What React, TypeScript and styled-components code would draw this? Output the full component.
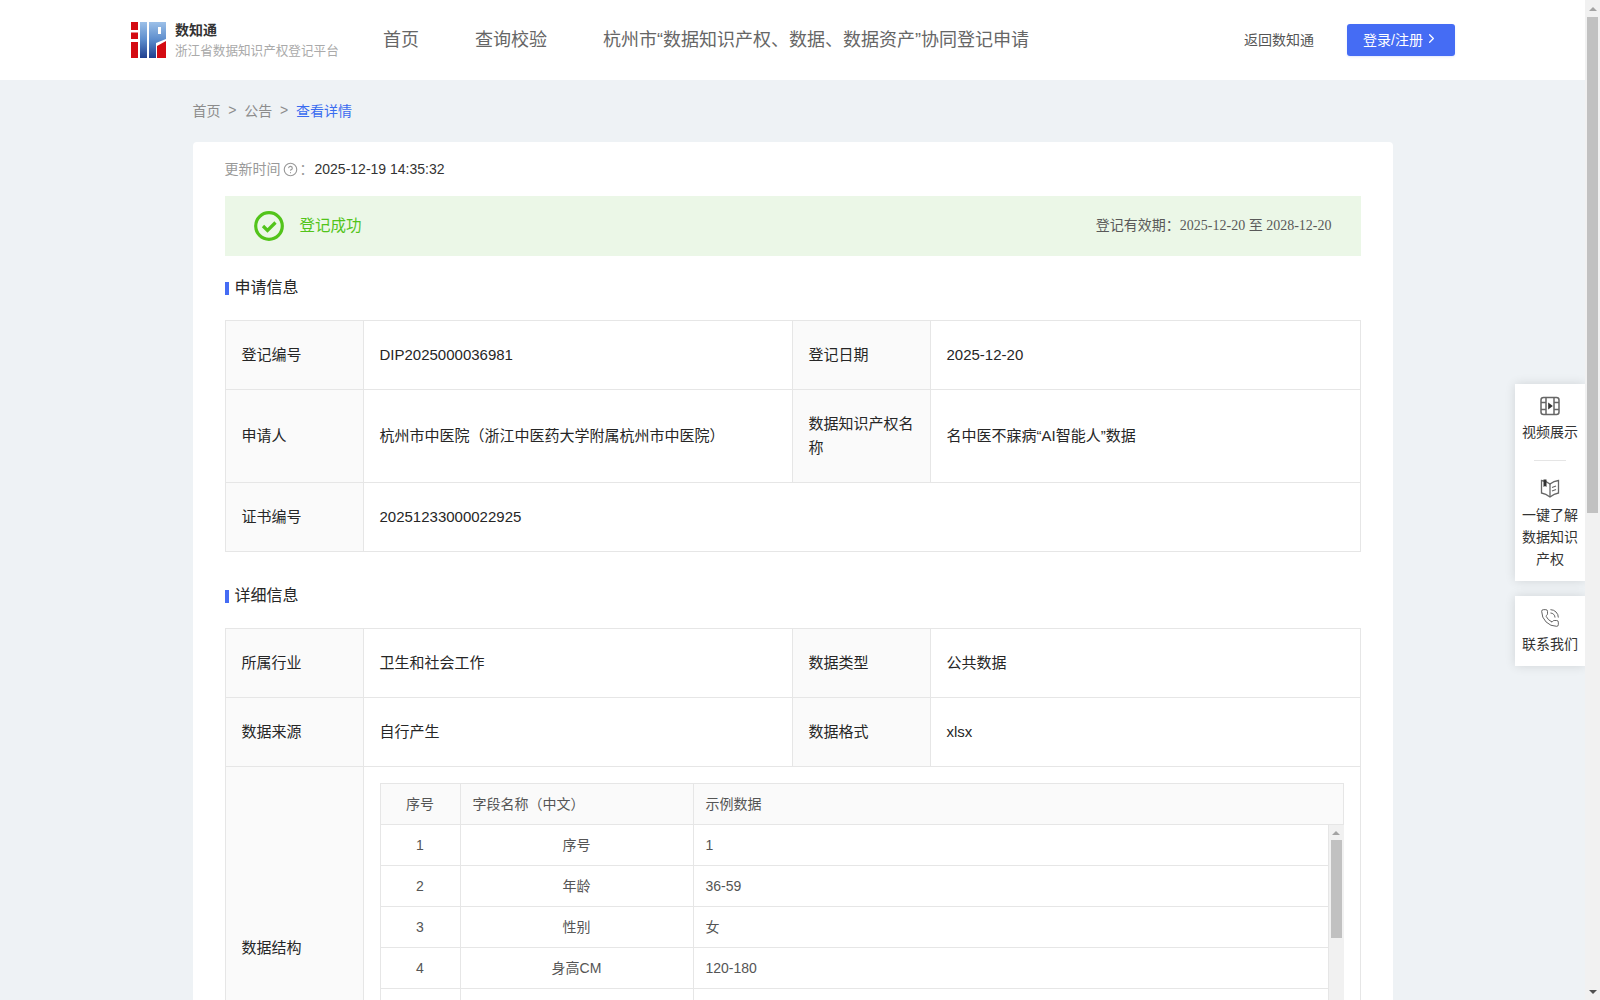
import styled, { createGlobalStyle } from 'styled-components'
import { ChevronRight, CircleHelp, PhoneCall } from 'lucide-react'

const GlobalStyle = createGlobalStyle`
  html, body {
    margin: 0;
    padding: 0;
    height: 100%;
    overflow: hidden;
    background: #eef2f5;
    font-family: "Liberation Sans", "Noto Sans CJK SC", sans-serif;
    color: #262626;
  }
`

const fields = [
  ['1', '序号', '1'],
  ['2', '年龄', '36-59'],
  ['3', '性别', '女'],
  ['4', '身高CM', '120-180'],
  ['', '', ''],
  ['', '', ''],
  ['', '', ''],
]

const Logo = () => (
  <svg width="35" height="36" viewBox="0 0 35 36">
    <defs>
      <linearGradient id="logoBlue" x1="0" y1="0" x2="0" y2="1">
        <stop offset="0" stopColor="#9cc0e8" />
        <stop offset="0.5" stopColor="#5c8ccc" />
        <stop offset="1" stopColor="#1f3f8f" />
      </linearGradient>
    </defs>
    <path fill="#d40b12" d="M0 0h7v8H0zM0 10.500h7v6.500H0zM0 20h7v16H0z" />
    <path fill="url(#logoBlue)" d="M9 0h7v36H9z" />
    <path fill="url(#logoBlue)" fillRule="evenodd" d="M18 0h17v17l-10 4v15h-7zM27 5v7h3V5z" />
    <path fill="#d40b12" d="M26 24l9-5v17h-9z" />
  </svg>
)

const FilmIcon = () => (
  <svg width="20" height="20" viewBox="0 0 20 20" fill="none" stroke="#666" strokeWidth="1.5">
    <rect x="1" y="1.500" width="18" height="17" rx="2.500" />
    <path d="M6 1.500v17M14 1.500v17M1 6.500h5M1 13.500h5M14 6.500h5M14 13.500h5" />
    <path d="M8.200 6.500l4.600 3.500-4.600 3.500z" fill="#333" stroke="none" />
  </svg>
)

const BookIcon = () => (
  <svg width="20" height="20" viewBox="0 0 20 20" fill="none" stroke="#666" strokeWidth="1.300">
    <path d="M1.500 2.500c3 .3 6 1.500 8.500 3.500 2.500-2 5.500-3.200 8.500-3.500v12.500c-3 .5-6 2-8.500 4-2.500-2-5.500-3.500-8.500-4z" />
    <path d="M10 6v13M12 9.500l4-1.500M12 13l4-1.500" />
    <path d="M3.500 1.500h3v7.500l-1.500-1-1.500 1z" fill="#333" stroke="none" />
  </svg>
)

const SuccessIcon = () => (
  <svg width="30" height="30" viewBox="0 0 30 30" fill="none" stroke="#52c41a">
    <circle cx="15" cy="15" r="13.300" strokeWidth="3.200" />
    <path d="M9 15l4.500 4.500L21.500 11.500" strokeWidth="3.200" />
  </svg>
)

const ScrollRail = ({
  button,
  thumbHeight,
  downColor,
}: {
  button: number
  thumbHeight: number
  downColor?: string
}) => (
  <Rail>
    <RailButton $size={button}>
      <ArrowUp />
    </RailButton>
    <Thumb $height={thumbHeight} />
    <RailFill />
    {downColor && (
      <RailButton $size={button}>
        <ArrowDown $color={downColor} />
      </RailButton>
    )}
  </Rail>
)

export default function App() {
  return (
    <>
      <GlobalStyle />
      <Shell>
        <Page>
          <Header>
            <Brand>
              <Logo />
              <BrandText>
                <BrandName>数知通</BrandName>
                <BrandSub>浙江省数据知识产权登记平台</BrandSub>
              </BrandText>
            </Brand>
            <Nav>
              <NavItem>首页</NavItem>
              <NavItem>查询校验</NavItem>
              <NavItem>杭州市“数据知识产权、数据、数据资产”协同登记申请</NavItem>
            </Nav>
            <HeaderRight>
              <BackLink>返回数知通</BackLink>
              <LoginButton>
                登录/注册
                <ChevronRight size={15} strokeWidth={2} />
              </LoginButton>
            </HeaderRight>
          </Header>

          <Content>
            <Breadcrumb>
              <span>首页</span>
              <Sep>&gt;</Sep>
              <span>公告</span>
              <Sep>&gt;</Sep>
              <Current>查看详情</Current>
            </Breadcrumb>

            <Card>
              <UpdateRow>
                <UpdateLabel>
                  更新时间
                  <CircleHelp size={15} strokeWidth={1.8} />：
                </UpdateLabel>
                <span>2025-12-19 14:35:32</span>
              </UpdateRow>

              <StatusBar>
                <StatusLeft>
                  <SuccessIcon />
                  <StatusText>登记成功</StatusText>
                </StatusLeft>
                <Validity>
                  <span>登记有效期：</span>
                  <ValidityDates>2025-12-20 至 2028-12-20</ValidityDates>
                </Validity>
              </StatusBar>

              <SectionTitle>申请信息</SectionTitle>
              <InfoTable>
                <InfoCols />
                <tbody>
                  <InfoRow $height={69}>
                    <LabelCell>登记编号</LabelCell>
                    <ValueCell>DIP2025000036981</ValueCell>
                    <LabelCell>登记日期</LabelCell>
                    <ValueCell>2025-12-20</ValueCell>
                  </InfoRow>
                  <InfoRow $height={93}>
                    <LabelCell>申请人</LabelCell>
                    <ValueCell>杭州市中医院（浙江中医药大学附属杭州市中医院）</ValueCell>
                    <LabelCell>数据知识产权名称</LabelCell>
                    <ValueCell>名中医不寐病“AI智能人”数据</ValueCell>
                  </InfoRow>
                  <InfoRow $height={69}>
                    <LabelCell>证书编号</LabelCell>
                    <ValueCell colSpan={3}>20251233000022925</ValueCell>
                  </InfoRow>
                </tbody>
              </InfoTable>

              <SecondTitle>详细信息</SecondTitle>
              <InfoTable>
                <InfoCols />
                <tbody>
                  <InfoRow $height={69}>
                    <LabelCell>所属行业</LabelCell>
                    <ValueCell>卫生和社会工作</ValueCell>
                    <LabelCell>数据类型</LabelCell>
                    <ValueCell>公共数据</ValueCell>
                  </InfoRow>
                  <InfoRow $height={69}>
                    <LabelCell>数据来源</LabelCell>
                    <ValueCell>自行产生</ValueCell>
                    <LabelCell>数据格式</LabelCell>
                    <ValueCell>xlsx</ValueCell>
                  </InfoRow>
                  <InfoRow>
                    <LabelCell>数据结构</LabelCell>
                    <StructureCell colSpan={3}>
                      <FieldHead>
                        <FieldCols />
                        <thead>
                          <tr>
                            <HeadCell $center>序号</HeadCell>
                            <HeadCell>字段名称（中文）</HeadCell>
                            <HeadCell>示例数据</HeadCell>
                          </tr>
                        </thead>
                      </FieldHead>
                      <FieldBody>
                        <FieldTable>
                          <FieldCols />
                          <tbody>
                            {fields.map((row, i) => (
                              <tr key={i}>
                                <BodyCell $center>{row[0]}</BodyCell>
                                <BodyCell $center>{row[1]}</BodyCell>
                                <BodyCell>{row[2]}</BodyCell>
                              </tr>
                            ))}
                          </tbody>
                        </FieldTable>
                        <ScrollRail button={15} thumbHeight={98} />
                      </FieldBody>
                    </StructureCell>
                  </InfoRow>
                </tbody>
              </InfoTable>
            </Card>
          </Content>

          <SideDock>
            <SidePanel>
              <SideItem>
                <FilmIcon />
                <SideText>视频展示</SideText>
              </SideItem>
              <SideDivider />
              <SideItem $gap={6}>
                <BookIcon />
                <SideText>一键了解数据知识产权</SideText>
              </SideItem>
            </SidePanel>
            <SidePanel>
              <SideItem>
                <PhoneCall size={20} strokeWidth={1.1} color="#555" />
                <SideText>联系我们</SideText>
              </SideItem>
            </SidePanel>
          </SideDock>
        </Page>
        <ScrollRail button={17} thumbHeight={496} downColor="#505050" />
      </Shell>
    </>
  )
}

const InfoCols = () => (
  <colgroup>
    <col width={138} />
    <col width={429} />
    <col width={138} />
    <col />
  </colgroup>
)

const FieldCols = () => (
  <colgroup>
    <col width={80} />
    <col width={233} />
    <col />
  </colgroup>
)

const Shell = styled.div`
  display: flex;
  height: 100vh;
  overflow: hidden;
`

const Page = styled.div`
  position: relative;
  flex: 1;
  min-width: 0;
  overflow: hidden;
`

const Rail = styled.div`
  width: 15px;
  flex-shrink: 0;
  display: flex;
  flex-direction: column;
  align-items: center;
  background: #f1f1f1;
`

const RailButton = styled.div<{ $size: number }>`
  height: ${(p) => p.$size}px;
  flex-shrink: 0;
  display: flex;
  align-items: center;
  justify-content: center;
`

const ArrowUp = styled.div`
  width: 0;
  height: 0;
  border-left: 4px solid transparent;
  border-right: 4px solid transparent;
  border-bottom: 4px solid #a3a3a3;
`

const ArrowDown = styled.div<{ $color: string }>`
  width: 0;
  height: 0;
  border-left: 4px solid transparent;
  border-right: 4px solid transparent;
  border-top: 4px solid ${(p) => p.$color};
`

const Thumb = styled.div<{ $height: number }>`
  width: 11px;
  flex-shrink: 0;
  height: ${(p) => p.$height}px;
  background: #c1c1c1;
`

const RailFill = styled.div`
  flex: 1;
`

const Header = styled.header`
  height: 80px;
  background: #fff;
  display: flex;
  align-items: center;
  padding: 0 130px 0 131px;
`

const Brand = styled.div`
  display: flex;
  align-items: center;
  gap: 9px;
  width: 224px;
`

const BrandText = styled.div`
  display: flex;
  flex-direction: column;
  gap: 3px;
  padding-top: 1px;
`

const BrandName = styled.div`
  font-size: 14px;
  font-weight: 700;
  line-height: 18px;
  color: #333;
`

const BrandSub = styled.div`
  font-size: 12.6px;
  line-height: 18px;
  color: #aaa;
  white-space: nowrap;
`

const Nav = styled.nav`
  display: flex;
  gap: 56px;
  margin: 0 0 4px 28px;
`

const NavItem = styled.a`
  font-size: 18px;
  color: #666;
  white-space: nowrap;
`

const HeaderRight = styled.div`
  margin-left: auto;
  display: flex;
  align-items: center;
  gap: 33px;
`

const BackLink = styled.a`
  font-size: 14px;
  color: #555;
  padding-bottom: 3px;
`

const LoginButton = styled.button`
  width: 108px;
  height: 32px;
  border: none;
  border-radius: 3px;
  padding: 0 0 3px;
  background: #456cf4;
  color: #fff;
  font: inherit;
  font-size: 14px;
  display: flex;
  align-items: center;
  justify-content: center;
  gap: 1px;
  box-shadow: 0 1px 2px rgba(69, 108, 244, 0.15);
`

const Content = styled.main`
  width: 1200px;
  margin: 0 auto;
`

const Breadcrumb = styled.div`
  box-sizing: border-box;
  height: 62px;
  padding-bottom: 3px;
  display: flex;
  align-items: center;
  font-size: 14px;
  color: #8c8c8c;
`

const Sep = styled.span`
  margin: 0 7.8px;
`

const Current = styled.span`
  color: #3a6cf0;
`

const Card = styled.section`
  background: #fff;
  border-radius: 4px;
  padding: 0 32px 32px;
`

const UpdateRow = styled.div`
  height: 54px;
  display: flex;
  align-items: center;
  font-size: 14px;
  color: #333;
`

const UpdateLabel = styled.span`
  display: inline-flex;
  align-items: center;
  gap: 2px;
  margin-bottom: 2px;
  color: #999;
  width: 90px;
  white-space: nowrap;

  svg {
    margin-top: 2px;
  }
`

const StatusBar = styled.div`
  height: 60px;
  background: #ebf7e7;
  display: flex;
  align-items: center;
  justify-content: space-between;
  padding: 0 29px;
`

const StatusLeft = styled.div`
  display: flex;
  align-items: center;
  gap: 16px;
`

const StatusText = styled.span`
  font-size: 15.5px;
  color: #52c41a;
  margin-bottom: 5px;
`

const Validity = styled.div`
  font-size: 14px;
  color: #595959;
  margin-bottom: 5px;
`

const ValidityDates = styled.span`
  font-family: "Liberation Serif", "Noto Sans CJK SC", serif;
`

const SectionTitle = styled.h3`
  box-sizing: border-box;
  height: 64px;
  margin: 0;
  padding-bottom: 4px;
  display: flex;
  align-items: center;
  font-size: 16px;
  font-weight: 400;
  color: #262626;

  &::before {
    content: '';
    width: 4px;
    height: 13px;
    margin: 4px 6px 0 0;
    background: #456cf4;
  }
`

const SecondTitle = styled(SectionTitle)`
  margin-top: 12px;
`

const InfoTable = styled.table`
  width: 100%;
  table-layout: fixed;
  border-collapse: collapse;
  font-size: 15px;
  line-height: 24px;
`

const InfoRow = styled.tr<{ $height?: number }>`
  height: ${(p) => (p.$height ? `${p.$height}px` : 'auto')};
`

const LabelCell = styled.td`
  border: 1px solid #e6e6e6;
  background: #fafafa;
  padding: 0 16px;
  color: #262626;
`

const ValueCell = styled.td`
  border: 1px solid #e6e6e6;
  padding: 0 16px;
  color: #262626;
`

const StructureCell = styled.td`
  border: 1px solid #e6e6e6;
  padding: 16px;
`

const FieldHead = styled.table`
  width: 100%;
  table-layout: fixed;
  border-collapse: collapse;
  font-size: 14px;
`

const FieldTable = styled(FieldHead)`
  flex: 1;
  min-width: 0;
  width: auto;
`

const FieldBody = styled.div`
  display: flex;
  align-items: stretch;
`

const HeadCell = styled.th<{ $center?: boolean }>`
  height: 40px;
  padding: 0 12px;
  border: 1px solid #e6e6e6;
  background: #fafafa;
  font-weight: 400;
  color: #555;
  text-align: ${(p) => (p.$center ? 'center' : 'left')};
`

const BodyCell = styled.td<{ $center?: boolean }>`
  height: 40px;
  padding: 0 12px;
  border: 1px solid #e6e6e6;
  border-top: none;
  color: #555;
  text-align: ${(p) => (p.$center ? 'center' : 'left')};
`

const SideDock = styled.aside`
  position: absolute;
  top: 384px;
  right: 0;
  width: 70px;
  display: flex;
  flex-direction: column;
  gap: 15px;
`

const SidePanel = styled.div`
  background: #fff;
  box-shadow: 0 0 10px rgba(0, 0, 0, 0.12);
  padding: 12px 0 11px;
  display: flex;
  flex-direction: column;
  align-items: center;
`

const SideItem = styled.div<{ $gap?: number }>`
  display: flex;
  flex-direction: column;
  align-items: center;
  gap: ${(p) => p.$gap ?? 5}px;
`

const SideText = styled.div`
  width: 56px;
  font-size: 14px;
  line-height: 22px;
  text-align: center;
  color: #333;
`

const SideDivider = styled.div`
  width: 32px;
  height: 1px;
  background: #e5e5e5;
  margin: 17px 0;
`
